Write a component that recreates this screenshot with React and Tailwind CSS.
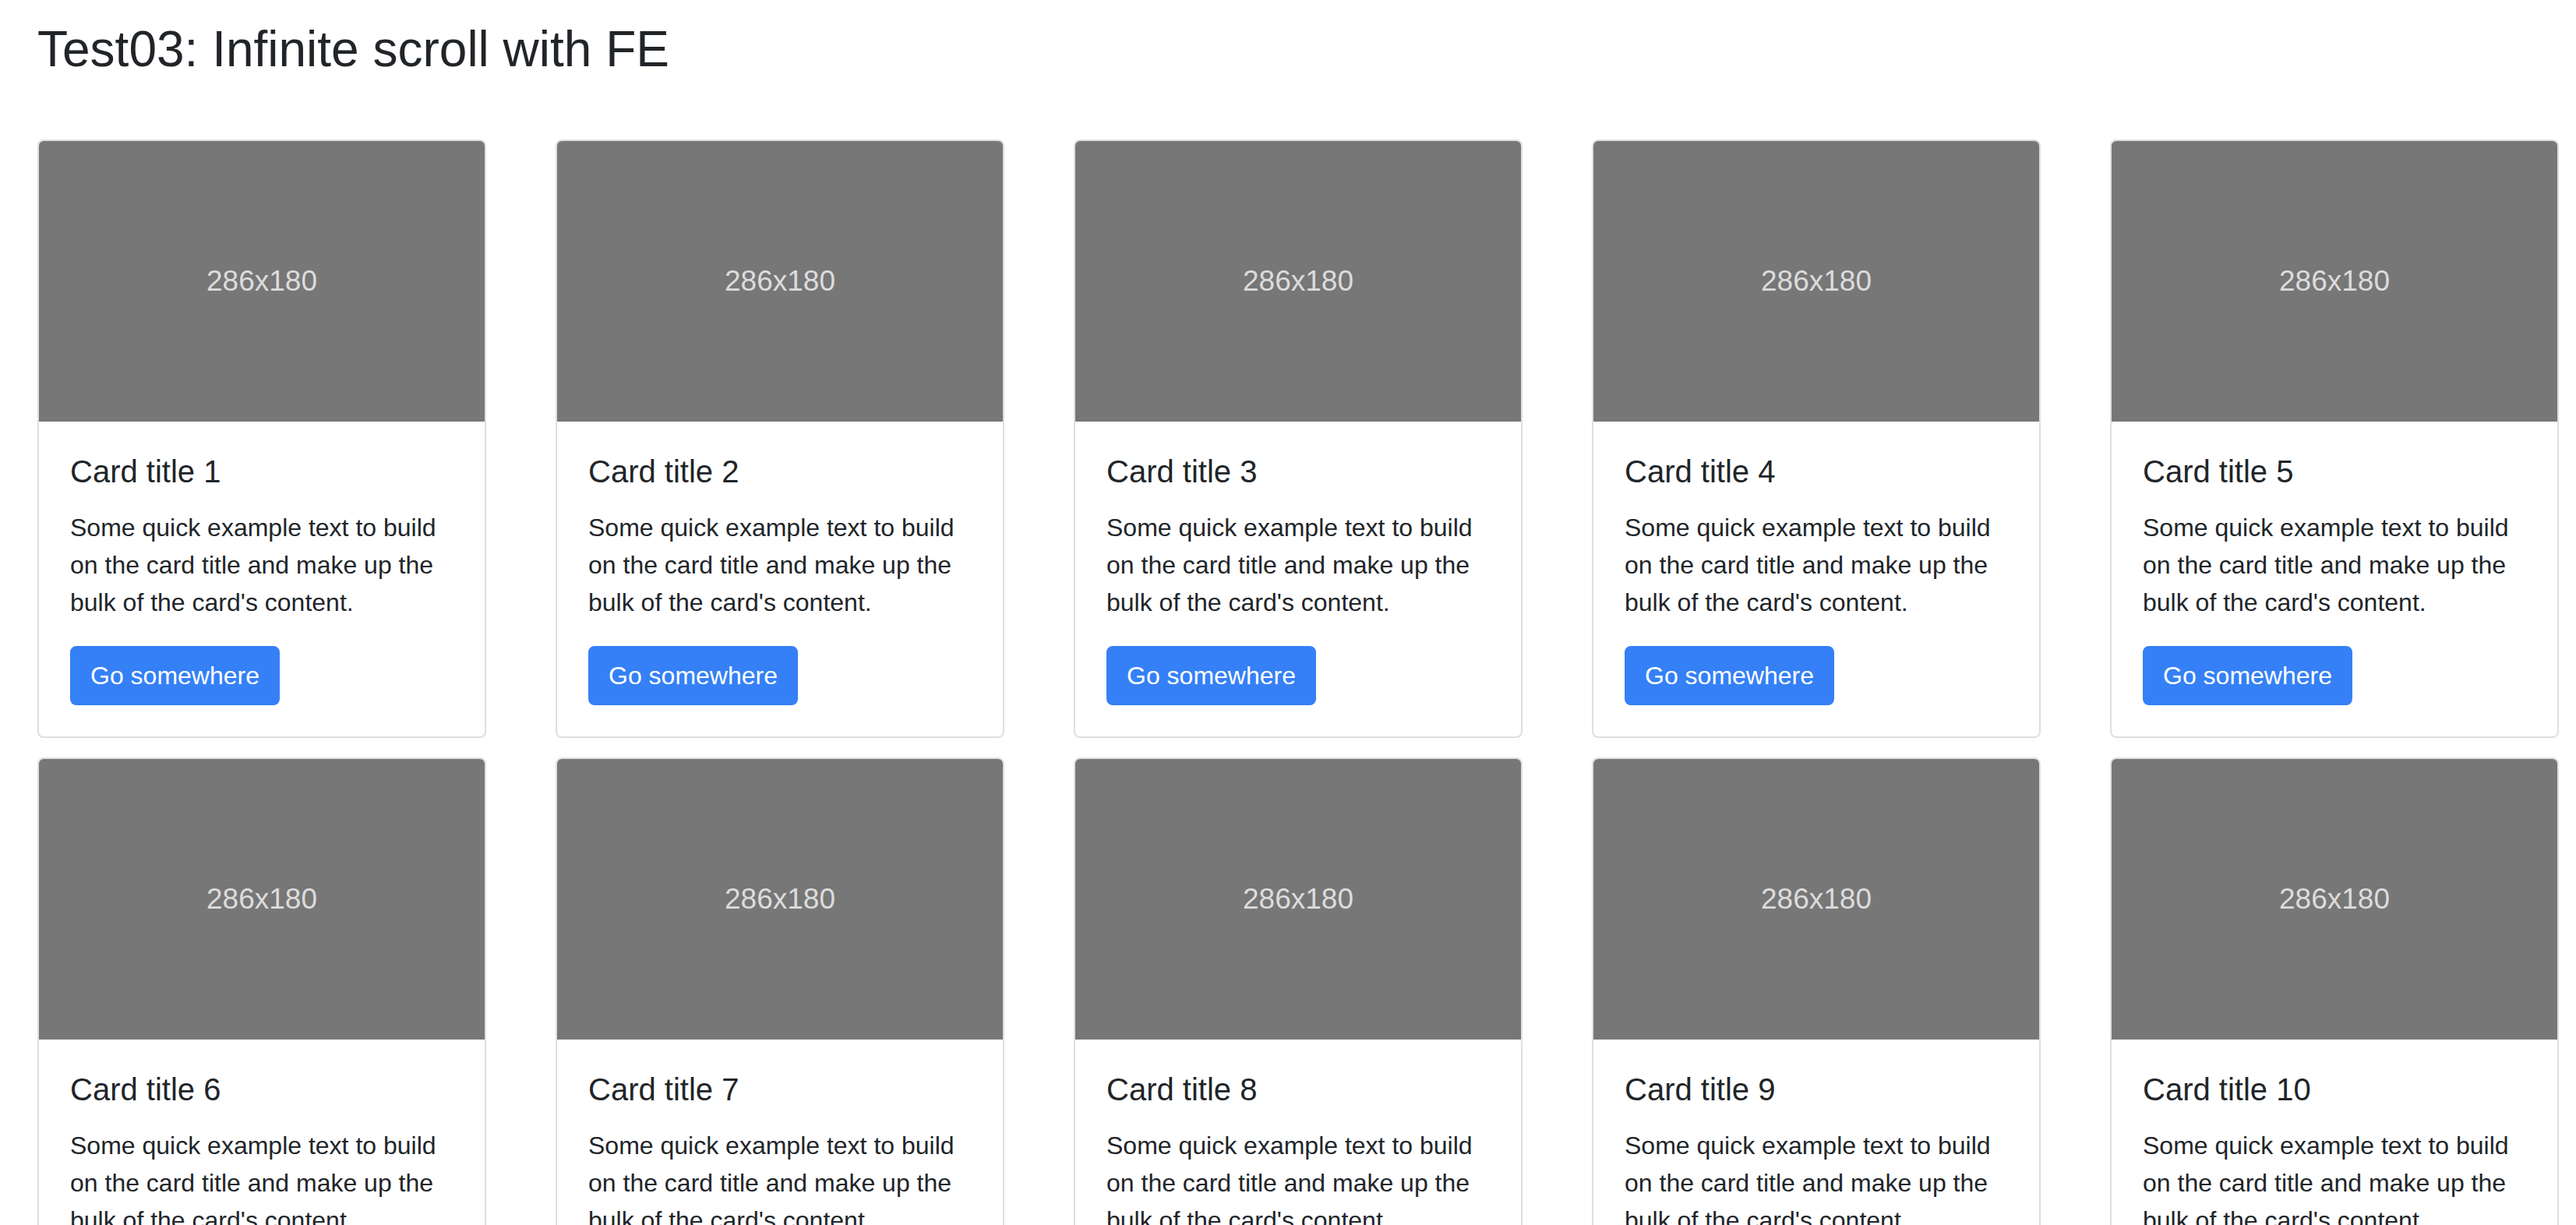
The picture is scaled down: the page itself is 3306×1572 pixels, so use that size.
import React from "react";

const cards = Array.from({ length: 10 }, (_, i) => i + 1);

function Card({ n }) {
  return (
    <div className="flex flex-col border-2 border-[#dfdfdf] rounded-[8px] overflow-hidden bg-white">
      <div className="h-[360px] bg-[#777777] flex items-center justify-center text-[#dcdcdc] text-[37px]">
        286x180
      </div>
      <div className="p-[40px]">
        <h5 className="text-[40px] leading-[1.2] font-medium mb-[24px]">Card title {n}</h5>
        <p className="text-[32px] leading-[1.5] mb-[32px]">
          Some quick example text to build on the card title and make up the bulk of the card's content.
        </p>
        <a
          href="#"
          className="inline-block bg-[#3580f6] border-2 border-[#3580f6] text-white text-[32px] leading-[1.5] px-[24px] py-[12px] rounded-[8px]"
        >
          Go somewhere
        </a>
      </div>
    </div>
  );
}

export default function App() {
  return (
    <main className="min-h-screen bg-white text-[#212529] font-['Liberation_Sans',Arial,sans-serif] px-[48px] pt-[25px]">
      <h2 className="text-[64px] leading-[1.2] mb-[77px]">Test03: Infinite scroll with FE</h2>
      <div className="grid grid-cols-[repeat(5,576px)] gap-x-[89px] gap-y-[25px]">
        {cards.map((n) => (
          <Card key={n} n={n} />
        ))}
      </div>
    </main>
  );
}
